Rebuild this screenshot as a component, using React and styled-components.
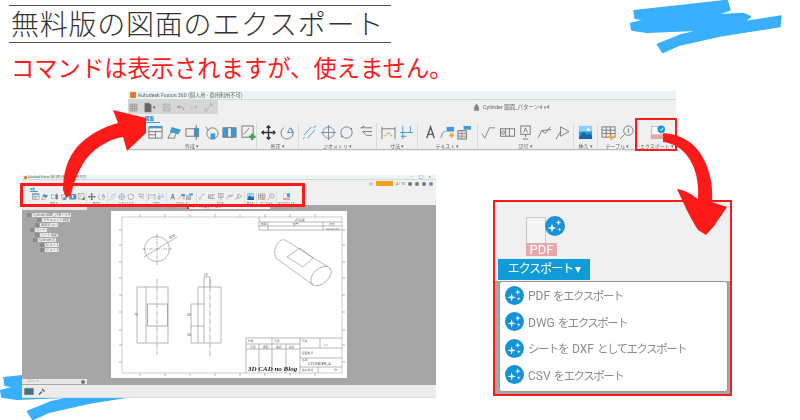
import styled, { createGlobalStyle } from "styled-components";

const JP = `"Noto Sans CJK JP", sans-serif`;
const UI = `Roboto, "Noto Sans CJK JP", sans-serif`;
const RED = "#ff1a1a";

const GlobalStyle = createGlobalStyle`
  html, body {
    margin: 0;
    padding: 0;
    background: #fff;
    overflow: hidden;
  }
`;

const Page = styled.div`
  position: relative;
  width: 800px;
  height: 420px;
  overflow: hidden;
  background: #fff;
  font-family: ${JP};
  padding: 5px 0 0 9px;
  box-sizing: border-box;
`;

/* heading */
const Heading = styled.h1`
  width: 382px;
  height: 38px;
  margin: 0;
  padding-left: 2px;
  box-sizing: border-box;
  border-top: 1.5px solid #555;
  border-bottom: 1.5px solid #555;
  font-size: 28px;
  line-height: 34px;
  font-weight: 300;
  letter-spacing: 0.75px;
  color: #333;
  white-space: nowrap;
`;
const SubHeading = styled.p`
  margin: 8px 0 0 2px;
  font-size: 23.3px;
  line-height: 32px;
  font-weight: 400;
  color: ${RED};
  white-space: nowrap;
`;

/* collage pieces */
const Piece = styled.div`
  position: absolute;
  left: ${(p) => p.$x}px;
  top: ${(p) => p.$y}px;
  width: ${(p) => p.$w}px;
  height: ${(p) => p.$h}px;
  box-sizing: border-box;
`;
const Shot = styled(Piece)`
  display: flex;
  flex-direction: column;
  background: #f0f0f0;
  filter: blur(0.5px);
  overflow: hidden;
`;
const RedBox = styled(Piece)`
  border: ${(p) => p.$b}px solid ${RED};
`;
const Overlay = styled.svg`
  position: absolute;
  left: 0;
  top: 0;
  pointer-events: none;
`;
const ScribbleSvg = styled.svg`
  position: absolute;
  left: ${(p) => p.$x}px;
  top: ${(p) => p.$y}px;
`;

const Scribble = ({ x, y }) => (
  <ScribbleSvg $x={x} $y={y} width="180" height="70" viewBox="0 0 540 210">
    <path
      fill="#38b0ff"
      stroke="#38b0ff"
      strokeWidth="4"
      strokeLinejoin="round"
      d="M42 32 L150 20 L322 1 L330 30 L285 45 L370 40 L392 50 L372 65 L483 48 L480 80 L300 108 L180 135 L128 158 L112 133 L180 105 L305 78 L320 70 L250 90 L80 97 L35 90 L32 70 L75 60 L45 55 Z"
    />
  </ScribbleSvg>
);

/* window chrome */
const TitleBar = styled.div`
  display: flex;
  align-items: center;
  flex: none;
  height: ${(p) => p.$h}px;
  gap: ${(p) => p.$h * 0.2}px;
  padding-left: 2px;
  background: #e9f4f4;
  border-bottom: 1px solid #d4d8d8;
  box-sizing: border-box;
  font-family: ${UI};
  font-size: ${(p) => p.$h * 0.58}px;
  color: #666;
  white-space: nowrap;
`;
const AppLogo = styled.span`
  display: block;
  flex: none;
  width: ${(p) => p.$s}px;
  height: ${(p) => p.$s}px;
  background: #e8762b;
  border-radius: 1px;
`;
const WinControls = styled.span`
  display: flex;
  gap: 6px;
  margin-left: auto;
  padding-right: 5px;
  color: #777;
  font-size: 4px;
`;
const QuickRow = styled.div`
  display: flex;
  align-items: center;
  flex: none;
  height: ${(p) => p.$h}px;
  font-family: ${UI};
`;
const QuickTools = styled.div`
  display: flex;
  align-items: center;
  gap: 5px;
  width: 90px;
  height: 100%;
  padding-left: 1px;
  box-sizing: border-box;
  background: #d6d6d6;
`;
const Caret = styled.span`
  width: 4px;
  margin-left: -5px;
  font-size: 5px;
  color: #555;
`;
const FileName = styled.div`
  display: flex;
  align-items: center;
  gap: 3px;
  margin-left: 255px;
  font-size: 5.5px;
  color: #666;
  white-space: nowrap;
`;
const SmallRight = styled.div`
  display: flex;
  align-items: center;
  gap: 3px;
  margin-left: auto;
  height: 100%;
  padding-right: 3px;
  font-size: 3.5px;
  color: #666;
`;
const OrangeChip = styled.span`
  display: block;
  width: 17px;
  height: 5px;
  background: #f5a11f;
`;
const Dot = styled.span`
  display: block;
  width: 4px;
  height: 4px;
  border-radius: 50%;
  background: ${(p) => p.$c || "#777"};
`;

/* ribbon */
const RibbonWrap = styled.div`
  position: relative;
  flex: none;
  width: 548px;
  height: 36px;
  zoom: ${(p) => p.$zoom || 1};
  display: flex;
  flex-direction: column;
  border-bottom: ${(p) => (p.$line ? "1.5px solid #bbb" : "none")};
  box-sizing: border-box;
`;
const TabRow = styled.div`
  flex: none;
  height: 9px;
  padding: 2px 0 0 16px;
  box-sizing: border-box;
`;
const ActiveTab = styled.span`
  display: block;
  width: 16px;
  height: 7px;
  padding-left: 1px;
  box-sizing: border-box;
  border-bottom: 1.5px solid #3d9bdc;
  color: #1479c4;
  font-size: 4.5px;
  line-height: 5px;
  font-weight: 700;
`;
const Groups = styled.div`
  display: flex;
  flex: 1;
  padding-bottom: 2px;
`;
const Group = styled.div`
  display: flex;
  flex-direction: column;
  align-items: center;
  flex: none;
  box-sizing: border-box;
  width: ${(p) => p.$w}px;
  border-right: ${(p) => (p.$last ? "none" : "1px solid #dcdcdc")};
`;
const IconRow = styled.div`
  display: flex;
  gap: ${(p) => p.$gap}px;
  height: 16px;
  margin-top: 2px;
  align-self: ${(p) => (p.$pad ? "flex-start" : "center")};
  padding-left: ${(p) => p.$pad || 0}px;
`;
const GroupLabel = styled.span`
  margin-top: 2px;
  font-size: 5px;
  line-height: 6px;
  color: #666;
  white-space: nowrap;
`;

const Ico = ({ children, w = 15 }) => (
  <svg width={w} height="15" viewBox="0 0 16 16" fill="none" stroke="#777" strokeWidth="1">
    {children}
  </svg>
);
const BLUE = "#3d9bdc";
const icons = {
  base: (
    <>
      <rect x="1" y="2" width="14" height="12" />
      <path d="M1 7H15M8 7V14M1 10.5H8" />
      <rect x="1" y="1" width="14" height="2.5" fill={BLUE} stroke="none" />
    </>
  ),
  proj: (
    <>
      <path d="M1 14L4 8H10L8 14Z" />
      <path d="M5 2L15 5L12 10L3 7Z" fill={BLUE} stroke="none" />
    </>
  ),
  sect: (
    <>
      <rect x="1" y="4" width="9" height="8" />
      <rect x="10" y="3" width="5" height="10" fill={BLUE} stroke="none" />
      <path d="M12 0V16" />
    </>
  ),
  detail: (
    <>
      <circle cx="9" cy="9" r="6" />
      <path d="M7 6V15H12V9H7" fill={BLUE} stroke="none" />
      <path d="M2 2L5 6" />
    </>
  ),
  brk: (
    <>
      <rect x="1" y="3" width="14" height="10" fill={BLUE} stroke="#777" />
      <rect x="6" y="3" width="4" height="10" fill="#f0f0f0" stroke="#777" />
    </>
  ),
  sketch: (
    <>
      <rect x="1" y="1" width="12" height="12" />
      <path d="M3 10L9 3" />
      <path d="M12 9V16M8.5 12.5H15.5" stroke="#3aa843" strokeWidth="2.5" />
    </>
  ),
  move: <path d="M8 1V15M1 8H15M6 3L8 1L10 3M6 13L8 15L10 13M3 6L1 8L3 10M13 6L15 8L13 10" stroke="#333" strokeWidth="1.5" />,
  rotate: (
    <>
      <path d="M11 3A6.5 6.5 0 1 1 4 3" />
      <path d="M8 8L11 3L14 8Z" stroke={BLUE} />
    </>
  ),
  lines: <path d="M2 11L10 2M6 14L14 5M1 15L3 13M12 3L15 1" stroke={BLUE} />,
  center: (
    <>
      <circle cx="8" cy="8" r="6" stroke={BLUE} />
      <path d="M8 0V16M0 8H16" stroke="#888" />
    </>
  ),
  circ: (
    <>
      <circle cx="8" cy="8" r="6" />
      <circle cx="3" cy="12" r="1" fill={BLUE} stroke="none" />
      <circle cx="13" cy="4" r="1" fill={BLUE} stroke="none" />
    </>
  ),
  leader: <path d="M15 3H3L7 1M15 7H5L9 11H15" stroke="#777" />,
  dimA: (
    <>
      <path d="M1 2V15M15 2V15M1 4H15" />
      <path d="M4 12L8 8L12 12" stroke="#f5a623" strokeDasharray="2 1" strokeWidth="1.4" />
    </>
  ),
  dimB: (
    <>
      <path d="M4 1V15M1 8H15M12 1V8" stroke={BLUE} />
      <path d="M2 12H8" />
    </>
  ),
  text: <path d="M4 14L8 2L12 14M5.500 10H10.500" stroke="#555" strokeWidth="1.500" />,
  textL: (
    <>
      <path d="M1 14C2 9 3 7 6 7" />
      <rect x="7" y="2" width="8" height="5" fill={BLUE} stroke="none" />
      <path d="M10 11H15M12.5 8.500V13.500" stroke="#f5a623" strokeWidth="2" />
    </>
  ),
  textB: (
    <>
      <rect x="1" y="6" width="9" height="9" fill="#ddd" />
      <path d="M1 9H10M1 12H10M5 6V15" stroke="#999" />
      <rect x="7" y="1" width="8" height="4" fill={BLUE} stroke="none" />
    </>
  ),
  check: <path d="M1 9L4 14L9 3H15" stroke="#888" />,
  frame: (
    <>
      <rect x="0.500" y="4" width="15" height="8" />
      <path d="M6 4V12M10 4V12" />
      <circle cx="3.300" cy="8" r="1.600" />
    </>
  ),
  datum: (
    <>
      <rect x="3" y="1" width="10" height="9" />
      <path d="M6 8L8 3L10 8" />
      <path d="M8 10V13M5 15H11" />
    </>
  ),
  weld: <path d="M1 14L5 6L15 5M5 6L9 9L14 2" stroke="#777" />,
  arrow: <path d="M1 15L6 7M6 2V12L15 7Z" stroke="#777" />,
  image: (
    <>
      <rect x="1" y="1" width="14" height="14" fill="#2f97dd" stroke="none" />
      <rect x="1" y="1" width="14" height="6" fill="#8fd0f5" stroke="none" />
      <circle cx="11" cy="5" r="1.500" fill="#fff" stroke="none" />
      <path d="M1 13L6 7L10 11L12 9L15 12V15H1Z" fill="#1468a8" stroke="none" />
    </>
  ),
  table: (
    <>
      <rect x="1" y="2" width="14" height="11" />
      <path d="M1 5.500H15M1 9H15M5.500 2V13M10 2V13" />
      <path d="M11 16V10M8 13H14" stroke="#f5a623" strokeWidth="2" />
    </>
  ),
  balloon: (
    <>
      <circle cx="10" cy="6" r="5" />
      <path d="M6 10L1 15" />
      <path d="M10 3.500V8.500" />
    </>
  ),
  pdf: (
    <>
      <rect x="1.500" y="1.500" width="10" height="13" stroke="#bbb" fill="#f6f6f6" />
      <rect x="1" y="10" width="15" height="5" fill="#e6a4a4" stroke="none" />
      <circle cx="12" cy="4.500" r="4" fill="#1593d6" stroke="none" />
      <path d="M10.500 4.500L12 6L14 3" stroke="#fff" />
    </>
  ),
};

const ribbonGroups = [
  { label: "作成", w: 129, pad: 20, gap: 3.5, items: ["base", "proj", "sect", "detail", "brk", "sketch"] },
  { label: "修正", w: 42, gap: 4, items: ["move", "rotate"] },
  { label: "ジオメトリ", w: 78, gap: 3.5, items: ["lines", "center", "circ", "leader"] },
  { label: "寸法", w: 41, gap: 3, items: ["dimA", "dimB"] },
  { label: "テキスト", w: 60, gap: 2, items: ["text", "textL", "textB"] },
  { label: "記号", w: 96, gap: 3.5, items: ["check", "frame", "datum", "weld", "arrow"] },
  { label: "挿入", w: 24, gap: 0, items: ["image"] },
  { label: "テーブル", w: 40, gap: 3, items: ["table", "balloon"] },
  { label: "エクスポート", w: 38, gap: 0, items: ["pdf"] },
];

const Ribbon = ({ zoom, line }) => (
  <RibbonWrap $zoom={zoom} $line={line}>
    <TabRow>
      <ActiveTab>図面</ActiveTab>
    </TabRow>
    <Groups>
      {ribbonGroups.map((g, i) => (
        <Group key={g.label} $w={g.w} $last={i === ribbonGroups.length - 1}>
          <IconRow $gap={g.gap} $pad={g.pad}>
            {g.items.map((name) => (
              <Ico key={name}>{icons[name]}</Ico>
            ))}
          </IconRow>
          <GroupLabel>{g.label} ▾</GroupLabel>
        </Group>
      ))}
    </Groups>
  </RibbonWrap>
);

/* small window body */
const Canvas = styled.div`
  position: relative;
  flex: 1;
  background: #a6a6a6;
  display: flex;
  padding-top: 6px;
`;
const TreeCol = styled.div`
  flex: none;
  width: 89px;
  padding-left: 3px;
  box-sizing: border-box;
  display: flex;
  flex-direction: column;
`;
const TreeHead = styled.div`
  height: 3px;
  width: 65px;
  margin: -4px 0 3px -3px;
  background: #e6e6e6;
`;
const TreeRow = styled.div`
  display: flex;
  align-items: center;
  gap: 1px;
  height: 4px;
  margin: 0 0 1px ${(p) => p.$i}px;
`;
const TreeMark = styled.span`
  flex: none;
  width: 4px;
  height: 3.500px;
  background: #8a8a8a;
`;
const TreeLabel = styled.span`
  background: #eaeaea;
  border-radius: 1px;
  color: #666;
  font-size: 3.300px;
  line-height: 4px;
  padding: 0 1px;
  white-space: nowrap;
`;
const Sheet = styled.div`
  flex: none;
  width: 236px;
  height: 167px;
  background: #fff;
`;
const SheetBanner = styled.div`
  position: absolute;
  left: 165px;
  top: 0;
  width: 83px;
  height: 4px;
  background: #f4f4f4;
  font-family: ${UI};
  font-size: 3px;
  line-height: 4px;
  color: #777;
  padding-left: 3px;
  box-sizing: border-box;
  white-space: nowrap;
  border-left: 2px solid ${RED};
`;
const CommentBox = styled.div`
  position: absolute;
  left: 0;
  bottom: 1px;
  display: flex;
  align-items: center;
  justify-content: space-between;
  width: 65px;
  height: 5px;
  background: #e8e8e8;
  font-size: 3px;
  line-height: 5px;
  color: #888;
  padding: 0 2px 0 5px;
  box-sizing: border-box;
`;
const StatusBar = styled.div`
  display: flex;
  align-items: center;
  flex: none;
  gap: 4px;
  height: 13px;
  padding-left: 2px;
  background: #ececec;
  border-bottom: 1px solid #ddd;
  box-sizing: border-box;
`;

const tree = [
  { i: 2, t: "Cylinder 図面_パターン4" },
  { i: 12, t: "ドキュメント設定" },
  { i: 10, t: "名前ビュー" },
  { i: 5, t: "シート" },
  { i: 10, t: "シート設定" },
  { i: 8, t: "Cylinder:1" },
  { i: 15, t: "ビュー 1" },
  { i: 15, t: "ビュー 2" },
];

const Drawing = () => {
  const topTicks = [140, 165, 190, 215, 240, 265, 290, 315];
  const sideTicks = [230, 245, 262, 278, 295, 312, 330, 345, 362];
  return (
    <svg
      width="236"
      height="167"
      viewBox="111 211 236 167"
      fill="none"
      stroke="#888"
      strokeWidth="0.6"
      display="block"
    >
      <rect x="122" y="217" width="220" height="156" stroke="#aaa" />
      {topTicks.map((x) => (
        <path key={x} d={`M${x} 214V217M${x} 373V376`} />
      ))}
      {sideTicks.map((y) => (
        <path key={y} d={`M119 ${y}H122M342 ${y}H345`} />
      ))}
      {/* circle view */}
      <circle cx="157" cy="249" r="12.500" />
      <path d="M157 234V265M142 249H172" strokeDasharray="4 1 1 1" />
      <path d="M144 257L172 240L177 237" />
      <text x="170" y="239" fontSize="3.500" fill="#555" stroke="none" transform="rotate(-30 170 239)">Ø30</text>
      {/* front view */}
      <rect x="146" y="287" width="22" height="56" />
      <rect x="147.500" y="304" width="20" height="22" stroke="#999" strokeWidth="0.800" />
      <path d="M157 279V355" strokeDasharray="5 1 1 1" />
      <path d="M137 287H146M137 343H146M137 287V343" />
      <text x="134" y="316" fontSize="3.500" fill="#555" stroke="none">70</text>
      {/* side view */}
      <rect x="198" y="287" width="23" height="56" />
      <path d="M204 343V277H210V287M191 304H204M191 326H204M191 304V343M191 343H198" />
      <path d="M210 279V356" strokeDasharray="5 1 1 1" />
      <text x="187" y="316" fontSize="3.500" fill="#555" stroke="none">20</text>
      <text x="187" y="336" fontSize="3.500" fill="#555" stroke="none">15</text>
      <text x="204" y="276" fontSize="3" fill="#555" stroke="none">10</text>
      {/* iso view */}
      <path d="M285 240L328 267M276 258L313 285M285 240C278 238 272 250 276 258" />
      <ellipse cx="321" cy="276" rx="12" ry="7.500" transform="rotate(-42 321 276)" />
      <path d="M287 257L300 248L313 258L303 267Z" />
      {/* top title block */}
      <path d="M259 217V230H342M259 222H342M259 226H342M268 222V230M323 222V230" />
      <g fontFamily={JP} fontSize="2.800" fill="#666" stroke="none">
        <text x="295" y="220.500">2D 図面</text>
        <text x="261" y="225">部署</text>
        <text x="293" y="225">部門</text>
        <text x="329" y="225">日付</text>
        <text x="326" y="229.500">2022/5/26</text>
      </g>
      {/* bottom title block */}
      <path d="M246 373V338H342M246 344H300M246 349H300M259 344V373M272 338V373M286 344V373M300 338V373M300 348H342M300 358H342M300 367H342M320 338V348M318 367V373" />
      <g fontFamily={JP} fontSize="2.800" fill="#666" stroke="none">
        <text x="248" y="342">作成</text>
        <text x="274" y="342">承認</text>
        <text x="302" y="342">尺度</text>
        <text x="324" y="346">1:1</text>
        <text x="250" y="348">承認</text>
        <text x="263" y="348">検図</text>
        <text x="276" y="348">確認</text>
        <text x="289" y="348">設計</text>
        <text x="302" y="354">図面番号</text>
        <text x="302" y="361">名称</text>
        <text x="302" y="371">第三角法</text>
        <text x="334" y="371">A3</text>
      </g>
      <text x="308" y="365" fontFamily="Roboto, sans-serif" fontSize="4" fill="#555" stroke="none">CYLINDER_A</text>
      <text
        x="248"
        y="371"
        fontFamily={`"Liberation Serif", serif`}
        fontSize="7"
        fontWeight="700"
        fontStyle="italic"
        fill="#222"
        stroke="none"
      >
        3D CAD no Blog
      </text>
    </svg>
  );
};

/* export panel */
const Panel = styled(Piece)`
  display: flex;
  flex-direction: column;
  background: linear-gradient(#f0f0f0 81px, #a6a6a6 81px);
  font-family: ${UI};
  filter: blur(0.3px);
`;
const PdfIcon = styled.div`
  position: relative;
  flex: none;
  width: 34px;
  height: 39px;
  margin: 17px 0 3px 33px;
`;
const PdfDoc = styled.div`
  width: 20px;
  height: 27px;
  background: #f5f5f5;
  border: 1px solid #c8c8c8;
  box-sizing: border-box;
`;
const PdfBand = styled.div`
  position: absolute;
  left: 0;
  bottom: 0;
  width: 31px;
  height: 13px;
  background: #e6a9a9;
  color: #fff;
  font-size: 13px;
  line-height: 13px;
  text-align: center;
`;
const PdfBadge = styled.span`
  position: absolute;
  left: 19px;
  top: -1px;
  display: flex;
`;
const ExportButton = styled.div`
  flex: none;
  width: 92px;
  height: 21px;
  margin-left: 5px;
  background: #0f9bd7;
  color: #fff;
  font-size: 12px;
  line-height: 21px;
  text-align: center;
  white-space: nowrap;
  letter-spacing: -1px;
`;
const Menu = styled.div`
  flex: none;
  width: 229px;
  height: 111px;
  margin: 1px 0 0 6px;
  background: #fff;
  border: 1.500px solid #999;
  border-radius: 3px;
  box-sizing: border-box;
  display: flex;
  flex-direction: column;
`;
const MenuItem = styled.div`
  display: flex;
  align-items: center;
  gap: 4px;
  height: 26.500px;
  padding-left: 5px;
  color: #8c8c8c;
  font-size: 12px;
  white-space: nowrap;
`;
const Kana = styled.span`
  font-size: 11.500px;
  letter-spacing: -1.500px;
`;
const KanaLead = styled(Kana)`
  margin-right: 4px;
`;

const Sparkle = ({ size }) => (
  <svg width={size} height={size} viewBox="0 0 20 20">
    <circle cx="10" cy="10" r="10" fill="#1593d6" />
    <path
      fill="#fff"
      d="M7 7.500L8 11L11.500 12L8 13L7 16.500L6 13L2.500 12L6 11ZM13.500 3.500L14.200 5.800L16.500 6.500L14.200 7.200L13.500 9.500L12.800 7.200L10.500 6.500L12.800 5.800ZM14.500 11.500L15 13L16.500 13.500L15 14L14.500 15.500L14 14L12.500 13.500L14 13Z"
    />
  </svg>
);

const menuItems = [
  { lead: "PDF", rest: "をエクスポート" },
  { lead: "DWG", rest: "をエクスポート" },
  { kana: "シートを", lead: "DXF", rest: "としてエクスポート" },
  { lead: "CSV", rest: "をエクスポート" },
];

export default function App() {
  return (
    <Page>
      <GlobalStyle />
      <Scribble x={620} y={0} />
      <Scribble x={-10} y={367} />
      <Heading>無料版の図面のエクスポート</Heading>
      <SubHeading>コマンドは表示されますが、使えません。</SubHeading>

      <Shot $x={128} $y={91} $w={548} $h={60}>
        <TitleBar $h={9}>
          <AppLogo $s={6} />
          Autodesk Fusion 360 (個人用 - 商用利用不可)
        </TitleBar>
        <QuickRow $h={14}>
          <QuickTools>
            <Ico w={9}><path d="M2 2H14V14H2ZM2 6H14M2 10H14M6 2V14M10 2V14" /></Ico>
            <Ico w={10}><path d="M3 1H10L13 4V15H3Z" fill="#666" /></Ico>
            <Caret>▾</Caret>
            <Ico w={9}><path d="M2 2H14V14H2ZM5 2V6H11V2M5 14V9H11V14" stroke="#999" /></Ico>
            <Ico w={9}><path d="M3 7L7 3M3 7L7 10M3 7H10C14 7 14 12 11 13" stroke="#777" /></Ico>
            <Ico w={9}><path d="M13 7L9 3M13 7L9 10M13 7H6C2 7 2 12 5 13" stroke="#aaa" /></Ico>
            <Ico w={9}><path d="M6 10L10 6M4 9L2 11A2 2 0 0 0 5 14L7 12M9 4L11 2A2 2 0 0 1 14 5L12 7" stroke="#888" /></Ico>
          </QuickTools>
          <FileName>
            <Ico w={7}><path d="M3 7H13V15H3ZM5 7V4A3 3 0 0 1 11 4V7" fill="#888" /></Ico>
            Cylinder 図面_パターン4 v4
          </FileName>
        </QuickRow>
        <Ribbon line />
      </Shot>

      <Shot $x={22} $y={175} $w={414} $h={223}>
        <TitleBar $h={5}>
          <AppLogo $s={3} />
          Autodesk Fusion 360 (個人用 - 商用利用不可)
          <WinControls>
            <span>−</span>
            <span>□</span>
            <span>×</span>
          </WinControls>
        </TitleBar>
        <QuickRow $h={7}>
          <SmallRight>
            <Dot $c="#c8c8c8" />
            <OrangeChip />
            <span>4 / 10</span>
            <Dot />
            <Dot />
            <Dot />
            <Dot $c="#6a8fb5" />
          </SmallRight>
        </QuickRow>
        <Ribbon zoom={0.5} />
        <Canvas>
          <TreeCol>
            <TreeHead />
            {tree.map((row) => (
              <TreeRow key={row.t} $i={row.i}>
                <TreeMark />
                <TreeLabel>{row.t}</TreeLabel>
              </TreeRow>
            ))}
          </TreeCol>
          <Sheet>
            <Drawing />
          </Sheet>
          <SheetBanner>シートの編集中 - 図面</SheetBanner>
          <CommentBox>
            コメント
            <Dot />
          </CommentBox>
        </Canvas>
        <StatusBar>
          <Ico w={10}><path d="M1 3H15V13H1Z" fill="#3d6f8f" /></Ico>
          <Ico w={8}><path d="M2 14L8 8M8 3L13 8" stroke="#555" strokeWidth="2.500" /></Ico>
        </StatusBar>
      </Shot>

      <RedBox $x={635} $y={118} $w={42} $h={33} $b={2.5} />
      <RedBox $x={20} $y={183} $w={285} $h={24} $b={3} />

      <Panel $x={493} $y={200} $w={239} $h={196}>
        <PdfIcon>
          <PdfDoc />
          <PdfBand>PDF</PdfBand>
          <PdfBadge>
            <Sparkle size={20} />
          </PdfBadge>
        </PdfIcon>
        <ExportButton>エクスポート ▾</ExportButton>
        <Menu>
          {menuItems.map((item) => (
            <MenuItem key={item.lead}>
              <Sparkle size={19} />
              <span>
                {item.kana && <KanaLead>{item.kana}</KanaLead>}
                {item.lead} <Kana>{item.rest}</Kana>
              </span>
            </MenuItem>
          ))}
        </Menu>
      </Panel>
      <RedBox $x={493} $y={200} $w={239} $h={196} $b={2} />

      <Overlay width="800" height="420" viewBox="0 0 800 420">
        <path
          fill={RED}
          d="M113 110 L146 118 L146 133 L127 151 L123 137 C108 139 92 150 84 162 C77 173 73 185 71 195 L66 198 L63 190 C63 172 68 158 77 147 C88 135 103 127 118 123 Z"
        />
        <path
          fill={RED}
          d="M663 133 C680 134 695 142 703 158 C711 172 713 188 712 202 L727 207 L714 226 L706 235 L698 230 C690 218 683 202 677 189 C685 190 693 195 698 199 C699 182 696 168 688 157 C682 148 672 143 663 142 Z"
        />
      </Overlay>
    </Page>
  );
}
